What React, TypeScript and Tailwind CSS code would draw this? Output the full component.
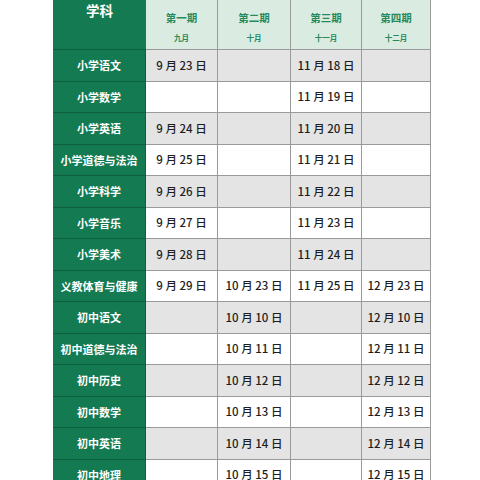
import React from "react";

const rows: [string, string, string, string, string][] = [
  ["小学语文", "9 月 23 日", "", "11 月 18 日", ""],
  ["小学数学", "", "", "11 月 19 日", ""],
  ["小学英语", "9 月 24 日", "", "11 月 20 日", ""],
  ["小学道德与法治", "9 月 25 日", "", "11 月 21 日", ""],
  ["小学科学", "9 月 26 日", "", "11 月 22 日", ""],
  ["小学音乐", "9 月 27 日", "", "11 月 23 日", ""],
  ["小学美术", "9 月 28 日", "", "11 月 24 日", ""],
  ["义教体育与健康", "9 月 29 日", "10 月 23 日", "11 月 25 日", "12 月 23 日"],
  ["初中语文", "", "10 月 10 日", "", "12 月 10 日"],
  ["初中道德与法治", "", "10 月 11 日", "", "12 月 11 日"],
  ["初中历史", "", "10 月 12 日", "", "12 月 12 日"],
  ["初中数学", "", "10 月 13 日", "", "12 月 13 日"],
  ["初中英语", "", "10 月 14 日", "", "12 月 14 日"],
  ["初中地理", "", "10 月 15 日", "", "12 月 15 日"],
];

const widths = ["w-[72px]", "w-[73px]", "w-[71px]", "w-[69px]"];
const heads: [string, string][] = [
  ["第一期", "九月"],
  ["第二期", "十月"],
  ["第三期", "十一月"],
  ["第四期", "十二月"],
];

export default function App() {
  return (
    <div
      className="w-[480px] h-[480px] overflow-hidden bg-white"
      style={{ fontFamily: '"Noto Sans CJK SC", "Noto Sans", sans-serif' }}
    >
      <div className="ml-[53px] w-[378px]">
        <div className="flex h-[50px]">
          <div className="w-[93px] shrink-0 bg-[#137a52] border-b border-[#0d5f3f] flex justify-center pt-[1px]">
            <span className="text-white font-bold text-[13.5px] leading-[18px]">学科</span>
          </div>
          {heads.map(([a, b], i) => (
            <div
              key={i}
              className={`${widths[i]} shrink-0 bg-[#daece2] border-r border-b border-[#9a9a9a] flex flex-col items-center`}
            >
              <span className="text-[#27895c] font-bold text-[10.5px] leading-[14px] mt-[11px]">{a}</span>
              <span className="text-[#27895c] font-bold text-[7.5px] leading-[10px] mt-[8px]">{b}</span>
            </div>
          ))}
        </div>
        {rows.map((r, ri) => {
          const gray = ri % 2 === 0;
          return (
            <div key={ri} className="flex h-[31.5px]">
              <div className="w-[93px] shrink-0 bg-[#137a52] border-b border-r border-[#0d5f3f] flex items-center justify-center">
                <span className="text-white font-bold text-[11px]">{r[0]}</span>
              </div>
              {r.slice(1).map((c, ci) => (
                <div
                  key={ci}
                  className={`${widths[ci]} shrink-0 ${gray ? "bg-[#e4e4e4]" : "bg-white"} border-r border-b border-[#9a9a9a] flex items-center justify-center`}
                >
                  <span className="text-[#1e1e1e] font-medium text-[11.5px] whitespace-pre">{c}</span>
                </div>
              ))}
            </div>
          );
        })}
      </div>
    </div>
  );
}
